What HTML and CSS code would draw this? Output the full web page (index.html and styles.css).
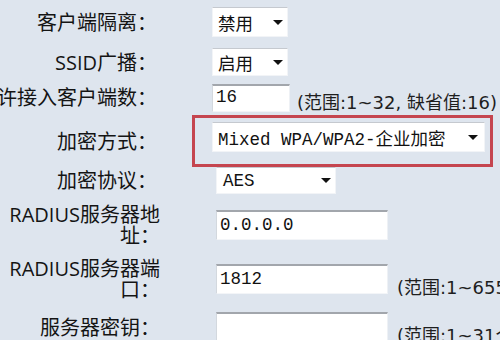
FILE: index.html
```html
<!DOCTYPE html>
<html lang="zh-CN">
<head>
<meta charset="utf-8">
<title>无线安全设置</title>
<link rel="stylesheet" href="styles.css">
</head>
<body>
<div class="form">
  <div class="label"><span>客户端隔离：</span></div>
  <div class="field"><div class="select sel-short"><span class="val">禁用</span><span class="arrow"></span></div></div>

  <div class="label"><span>SSID广播：</span></div>
  <div class="field"><div class="select sel-short sel-2"><span class="val">启用</span><span class="arrow"></span></div></div>

  <div class="label"><span class="nowrap">允许接入客户端数：</span></div>
  <div class="field"><div class="input in-short">16</div><span class="hint">(范围:1~32, 缺省值:16)</span></div>

  <div class="label"><span>加密方式：</span></div>
  <div class="field field-mark"><div class="mark"><div class="select sel-long"><span class="val">Mixed WPA/WPA2-企业加密</span><span class="arrow"></span></div></div></div>

  <div class="label"><span>加密协议：</span></div>
  <div class="field field-low"><div class="select sel-mid"><span class="val">AES</span><span class="arrow"></span></div></div>

  <div class="label label-low"><span>RADIUS服务器地址：</span></div>
  <div class="field field-low"><div class="input in-long">0.0.0.0</div></div>

  <div class="label label-low"><span>RADIUS服务器端口：</span></div>
  <div class="field field-low"><div class="input in-long">1812</div><span class="hint hint-low">(范围:1~65535)</span></div>

  <div class="label label-low"><span>服务器密钥：</span></div>
  <div class="field field-low"><div class="input in-long"></div><span class="hint hint-low">(范围:1~31个字符)</span></div>
</div>
</body>
</html>
```
FILE: styles.css
```css
html, body {
  margin: 0;
  padding: 0;
  background: #dee5ee;
  overflow: hidden;
}

.form {
  display: grid;
  grid-template-columns: 160px 340px;
  grid-template-rows: 44px 36px 35px 52px 27px 62px 46px 50px;
  align-items: center;
  width: 500px;
}

.label {
  display: flex;
  justify-content: flex-end;
  padding-right: 3px;
  font-family: "Open Sans", "Noto Sans CJK SC", sans-serif;
  font-size: 20px;
  line-height: 21px;
  color: #141414;
  text-align: right;
}

.label-low {
  padding-right: 0;
}

.nowrap {
  white-space: nowrap;
}

.field {
  display: flex;
  align-items: center;
  padding-left: 52px;
  white-space: nowrap;
}

.field-low {
  padding-left: 56px;
}

.field-mark {
  padding-left: 32px;
  align-self: stretch;
}

.mark {
  box-sizing: border-box;
  width: 301px;
  height: 52px;
  border: 3px solid #c5454f;
  padding: 4px 5px 12px 17px;
}

.select,
.input {
  box-sizing: border-box;
  flex-shrink: 0;
  background: #ffffff;
  font-family: "Liberation Mono", "Noto Sans CJK SC", monospace;
  font-size: 17.5px;
  color: #111;
  display: flex;
  align-items: center;
}

.select {
  justify-content: space-between;
  border: 1px solid #f2f4f7;
  border-top-color: #c5c9cf;
  padding: 0 4px 0 5px;
}

.arrow {
  width: 0;
  height: 0;
  border-left: 5px solid transparent;
  border-right: 5px solid transparent;
  border-top: 5px solid #111;
}

.sel-short {
  width: 76px;
  height: 30px;
}

.sel-2 {
  height: 28px;
}

.sel-long {
  width: 273px;
  height: 30px;
  padding-right: 6px;
}

.sel-mid {
  width: 120px;
  height: 27px;
  padding-left: 6px;
}

.input {
  border: 1px solid #d3d8de;
  border-top: 2px solid #a2a6ac;
  border-right-color: #eef1f5;
  border-bottom-color: #f3f5f8;
  padding: 0 3px 2px;
}

.in-short {
  width: 78px;
  height: 28px;
}

.in-long {
  width: 172px;
  height: 30px;
}

.hint {
  font-family: "DejaVu Sans", "Noto Sans CJK SC", sans-serif;
  font-size: 18px;
  color: #1e1e1e;
  margin-left: 7px;
  margin-top: 6px;
}

.hint-low {
  margin-left: 9px;
  margin-top: 14px;
}
```
